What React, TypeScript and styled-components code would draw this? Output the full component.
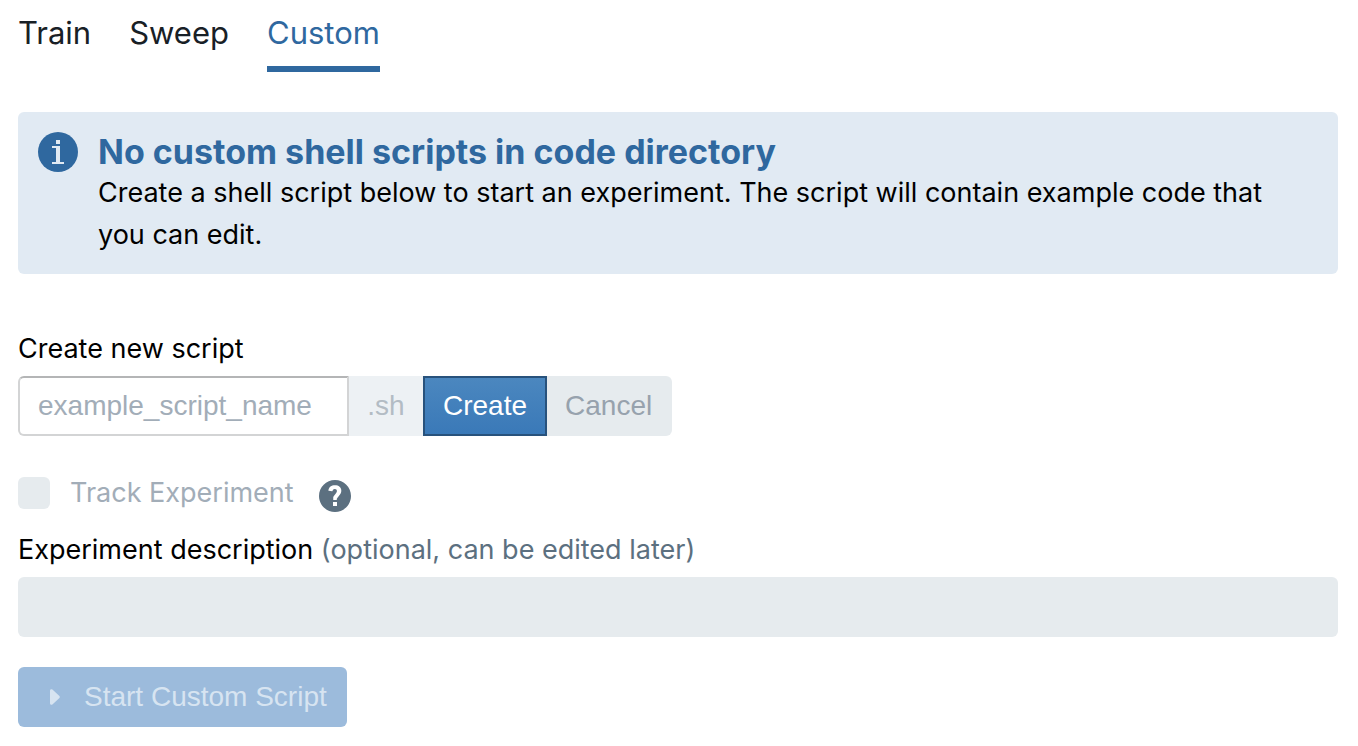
import React, { useState } from 'react';
import styled, { createGlobalStyle } from 'styled-components';

const GlobalStyle = createGlobalStyle`
  *, *::before, *::after { box-sizing: border-box; }
  body {
    margin: 0;
    background: #ffffff;
    color: #000000;
    font-family: Inter, "Liberation Sans", sans-serif;
    font-size: 27px;
    line-height: 42px;
  }
  button, input { font-family: "Liberation Sans", Arial, sans-serif; font-size: 28px; }
`;

const Page = styled.main`
  padding: 0 20px 20px 18px;
`;

const TabList = styled.div`
  display: flex;
  gap: 38px;
  margin-bottom: 40px;
`;

const Tab = styled.button<{ $active: boolean }>`
  height: 72px;
  padding: 0;
  border: 0;
  border-bottom: 6px solid ${(p) => (p.$active ? '#2f689f' : 'transparent')};
  background: none;
  color: ${(p) => (p.$active ? '#2f689f' : '#182026')};
  font-family: Inter, "Liberation Sans", sans-serif;
  font-size: 31px;
  line-height: 66px;
  cursor: pointer;
`;

const Callout = styled.section`
  display: flex;
  align-items: flex-start;
  gap: 20px;
  padding: 20px 40px 18px 20px;
  margin-bottom: 54px;
  border-radius: 6px;
  background: #e1eaf3;
`;

const CalloutIcon = styled.svg`
  flex: none;
  width: 40px;
  height: 40px;
`;

const CalloutTitle = styled.h4`
  margin: 0;
  color: #2f689f;
  font-size: 34px;
  font-weight: 700;
  line-height: 40px;
`;

const CalloutText = styled.p`
  margin: 0;
`;

const FieldLabel = styled.label`
  display: block;
  margin-bottom: 6px;
`;

const Muted = styled.span`
  color: #5c7080;
`;

const ControlGroup = styled.div`
  display: flex;
  height: 60px;
  margin-bottom: 36px;
`;

const NameInput = styled.input`
  width: 331px;
  padding: 0 18px;
  border: 2px solid #d3d4d5;
  border-top-color: #b4b5b6;
  border-radius: 6px 0 0 6px;
  background: #ffffff;
  outline: none;
  &::placeholder { color: #a2adb8; opacity: 1; }
`;

const Suffix = styled.span`
  display: flex;
  align-items: center;
  justify-content: center;
  width: 74px;
  background: #edf1f4;
  color: #b3bcc4;
  font-family: "Liberation Sans", Arial, sans-serif;
  font-size: 28px;
`;

const GroupButton = styled.button<{ $primary?: boolean }>`
  padding: ${(p) => (p.$primary ? '0 18px' : '0 20px 0 18px')};
  border: ${(p) => (p.$primary ? '2px solid #28527c' : '0')};
  border-radius: ${(p) => (p.$primary ? '0' : '0 6px 6px 0')};
  background: ${(p) => (p.$primary ? 'linear-gradient(#4b87bf, #3a79b8)' : '#e6ebee')};
  color: ${(p) => (p.$primary ? '#ffffff' : '#97a2ad')};
`;

const TrackRow = styled.div`
  display: flex;
  align-items: center;
  height: 42px;
  margin-bottom: 15px;
`;

const TrackLabel = styled.label`
  display: flex;
  align-items: center;
  gap: 20px;
  margin-right: 25px;
  color: #a2adb8;
`;

const Checkbox = styled.input`
  appearance: none;
  width: 32px;
  height: 32px;
  margin: 0;
  border-radius: 6px;
  background: #e6ebee;
`;

const HelpButton = styled.button`
  display: flex;
  margin: 6px 0 0;
  padding: 0;
  border: 0;
  background: none;
`;

const DescriptionInput = styled.input`
  display: block;
  width: 100%;
  height: 60px;
  margin-bottom: 30px;
  padding: 0 20px;
  border: 0;
  border-radius: 6px;
  background: #e6ebee;
`;

const StartButton = styled.button`
  display: flex;
  align-items: center;
  gap: 14px;
  height: 60px;
  padding: 0 20px;
  border: 0;
  border-radius: 6px;
  background: #9cbbdc;
  color: #d7e4f1;
`;

const tabs = ['Train', 'Sweep', 'Custom'];

export default function App() {
  const [active, setActive] = useState('Custom');
  const [name, setName] = useState('');

  return (
    <>
      <GlobalStyle />
      <Page>
        <TabList role="tablist">
          {tabs.map((tab) => (
            <Tab
              key={tab}
              type="button"
              role="tab"
              aria-selected={tab === active}
              $active={tab === active}
              onClick={() => setActive(tab)}
            >
              {tab}
            </Tab>
          ))}
        </TabList>

        <Callout>
          <CalloutIcon viewBox="0 0 40 40" aria-hidden="true">
            <circle cx="20" cy="20" r="20" fill="#2f689f" />
            <path
              d="M18 8h4v4h-4zM16 14h6v16h4v2H14v-2h4V16h-4v-2z"
              fill="#e1eaf3"
            />
          </CalloutIcon>
          <div>
            <CalloutTitle>No custom shell scripts in code directory</CalloutTitle>
            <CalloutText>
              Create a shell script below to start an experiment. The script will contain example
              code that you can edit.
            </CalloutText>
          </div>
        </Callout>

        <FieldLabel htmlFor="script-name">Create new script</FieldLabel>
        <ControlGroup>
          <NameInput
            id="script-name"
            placeholder="example_script_name"
            value={name}
            onChange={(e) => setName(e.target.value)}
          />
          <Suffix>.sh</Suffix>
          <GroupButton type="button" $primary>Create</GroupButton>
          <GroupButton type="button">Cancel</GroupButton>
        </ControlGroup>

        <TrackRow>
          <TrackLabel>
            <Checkbox type="checkbox" disabled />
            Track Experiment
          </TrackLabel>
          <HelpButton type="button" aria-label="Help">
            <svg width="32" height="32" viewBox="0 0 16 16" aria-hidden="true">
              <path
                fill="#5c7080"
                fillRule="evenodd"
                d="M8 0C3.580 0 0 3.580 0 8s3.580 8 8 8 8-3.580 8-8-3.580-8-8-8zM7 13v-2h2v2H7zM10.930 6.480c-.14.320-.35.640-.620.970L9.250 8.830c-.12.150-.24.290-.280.420-.04.130-.09.300-.090.520V10H7.120V8.880s.050-.510.210-.710L8.400 6.730c.220-.26.350-.49.440-.68.090-.19.120-.38.120-.58 0-.3-.1-.55-.28-.75-.18-.19-.44-.28-.76-.28-.33 0-.59.100-.78.290-.19.190-.33.460-.4.810-.03.110-.1.150-.2.140l-1.7-.25c-.12-.01-.16-.08-.14-.19.120-.82.460-1.470 1.030-1.940.570-.48 1.320-.72 2.250-.72.470 0 .900.070 1.290.220s.72.340 1 .59c.280.250.490.550.650.890.150.350.220.720.220 1.120s-.07.750-.21 1.080z"
              />
            </svg>
          </HelpButton>
        </TrackRow>

        <FieldLabel htmlFor="description">
          Experiment description <Muted>(optional, can be edited later)</Muted>
        </FieldLabel>
        <DescriptionInput id="description" disabled />

        <StartButton type="button" disabled>
          <svg width="32" height="32" viewBox="0 0 32 32" aria-hidden="true">
            <path d="M12 9.500v13a1.500 1.500 0 0 0 2.400 1l7-6.500a1.400 1.400 0 0 0 0-2l-7-6.500a1.500 1.500 0 0 0-2.400 1z" fill="#d7e4f1" />
          </svg>
          Start Custom Script
        </StartButton>
      </Page>
    </>
  );
}
